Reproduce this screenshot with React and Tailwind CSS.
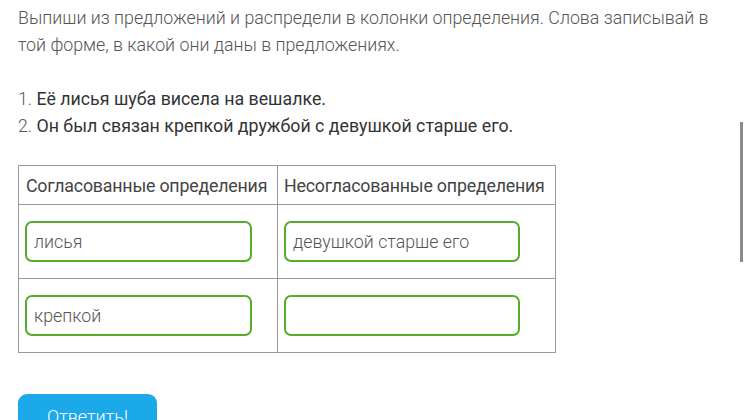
export default function App() {
  const font = { fontFamily: 'Roboto, "Noto Sans", sans-serif' };
  return (
    <div className="w-[747px] h-[420px] overflow-hidden bg-white relative" style={font}>
      <div className="pl-[18px] pr-[30px] pt-[4px] text-[17.8px] leading-[27px] text-[#555] font-light">
        <p>
          Выпиши из предложений и распредели в колонки определения. Слова записывай в той форме, в какой они даны в предложениях.
        </p>
        <div className="mt-[27px]">
          <div>1. <span className="font-normal text-[#333]">Её лисья шуба висела на вешалке.</span></div>
          <div>2. <span className="font-normal text-[#333]">Он был связан крепкой дружбой с девушкой старше его.</span></div>
        </div>
        <table className="mt-[26px] border-collapse border border-[#9a9a9a] text-[#444] table-fixed w-[537px]">
          <colgroup>
            <col className="w-[259px]" />
            <col className="w-[278px]" />
          </colgroup>
          <tbody>
            <tr className="h-[39px]">
              <td className="border border-[#9a9a9a] px-[7px] font-normal text-[#444] whitespace-nowrap tracking-[-0.2px]">Согласованные определения</td>
              <td className="border border-[#9a9a9a] px-[6px] font-normal text-[#444] whitespace-nowrap tracking-[-0.2px]">Несогласованные определения</td>
            </tr>
            <tr className="h-[74px]">
              <td className="border border-[#9a9a9a] px-[6px]">
                <div className="h-[41px] w-[227px] border-2 border-[#56ad2c] rounded-[7px] px-[7px] flex items-center text-[#555] font-light">лисья</div>
              </td>
              <td className="border border-[#9a9a9a] px-[6px]">
                <div className="h-[41px] w-[236px] border-2 border-[#56ad2c] rounded-[7px] px-[7px] flex items-center text-[#555] font-light">девушкой старше его</div>
              </td>
            </tr>
            <tr className="h-[74px]">
              <td className="border border-[#9a9a9a] px-[6px]">
                <div className="h-[41px] w-[227px] border-2 border-[#56ad2c] rounded-[7px] px-[7px] flex items-center text-[#555] font-light">крепкой</div>
              </td>
              <td className="border border-[#9a9a9a] px-[6px]">
                <div className="h-[41px] w-[236px] border-2 border-[#56ad2c] rounded-[7px] px-[7px] flex items-center text-[#555] font-light"></div>
              </td>
            </tr>
          </tbody>
        </table>
        <button className="mt-[41px] w-[139px] h-[50px] bg-[#1ba9e9] rounded-[9px] text-white font-light text-[18px] pt-[9px] flex justify-center items-start">
          Ответить!
        </button>
      </div>
      <div className="absolute left-[740px] top-[122px] w-[3px] h-[140px] bg-[#8a8a8a]"></div>
    </div>
  );
}
